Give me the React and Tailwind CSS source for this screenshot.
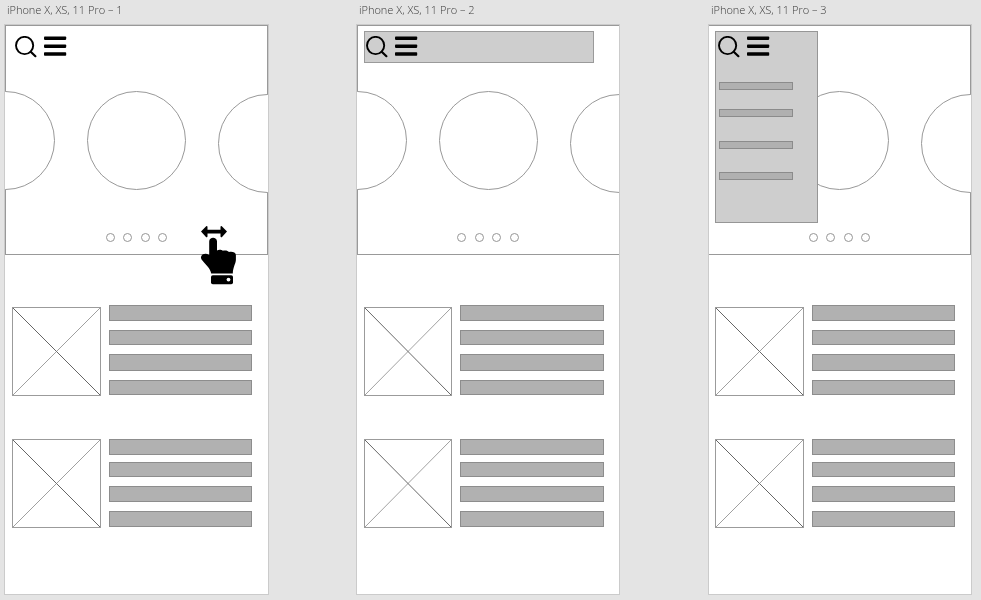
const LIST_ROWS = [
  {
    top: "mt-[50px]",
    image: "mt-[2px]",
    bars: ["h-[16px]", "mt-[9px] h-[15px]", "mt-[9px] h-[17px]", "mt-[9px] h-[15px]"],
    height: "h-[91px]",
  },
  {
    top: "mt-[43px]",
    image: "mt-0",
    bars: ["h-[16px]", "mt-[7px] h-[15px]", "mt-[9px] h-[16px]", "mt-[9px] h-[16px]"],
    height: "h-[89px]",
  },
];

function SearchIcon() {
  return (
    <svg className="block h-[22px] w-[22px] shrink-0" viewBox="0 0 22 22" fill="none" stroke="#000">
      <circle cx="9.6" cy="9.5" r="8.6" strokeWidth="1.9" />
      <path d="M15.7 15.7 20.4 20.2" strokeWidth="2.2" strokeLinecap="round" />
    </svg>
  );
}

function MenuIcon() {
  return (
    <svg className="block h-[22px] w-[23px] shrink-0" viewBox="0 0 23 22">
      <rect x="0" y="0.4" width="22.2" height="3.5" rx="0.8" />
      <rect x="0" y="8.4" width="22.2" height="3.5" rx="0.8" />
      <rect x="0" y="16.3" width="22.2" height="3.5" rx="0.8" />
    </svg>
  );
}

function SwipeHand() {
  return (
    <svg className="absolute left-[195px] top-[200px] z-10 h-[60px] w-[37px]" viewBox="0 0 37 60">
      <path
        d="M6.2 1.2 1 6.6 6.2 12.2Q7.5 12.7 7.5 11.2V8.5H20.5V11.2Q20.5 12.7 21.8 12.2L27 6.6 21.8 1.2Q20.5.7 20.5 2.2V4.8H7.5V2.2Q7.5.7 6.2 1.2Z"
      />
      <path
        d="M9.2 16.4C9.2 11.4 17 11.4 17 16.4V25.4C18.6 24.4 21.6 24.4 22.8 25.8C25 25 28 25.4 29 27C32 26.2 35.7 27.2 35.9 30V35C35.6 39 33 42 32.8 48.5H11.2C10.3 43 5.5 39.5 2.4 35.5C-1.6 31.4 3.7 26.6 9.2 30Z"
      />
      <rect x="11" y="50.3" width="22" height="9" rx="1.8" />
      <circle cx="28.5" cy="54.6" r="1.9" fill="#fff" />
    </svg>
  );
}

function ImagePlaceholder({ className }) {
  return (
    <div className={`h-[89px] shrink-0 border border-[#9b9b9b] ${className}`}>
      <svg className="block h-full w-full" viewBox="0 0 87 87" preserveAspectRatio="none">
        <path d="M0 0 87 87" stroke="#666" strokeWidth="1" />
        <path d="M87 0 0 87" stroke="#777" strokeWidth="0.7" />
      </svg>
    </div>
  );
}

function Circle({ className }) {
  return <div className={`h-[99px] w-[99px] shrink-0 rounded-full border border-[#999] bg-white ${className}`} />;
}

function MenuPanel() {
  return (
    <div className="absolute left-[6px] top-[6px] flex h-[192px] w-[103px] flex-col border border-[#969696] bg-[#cecece] pl-[3px] pt-[50px]">
      <div className="h-[8px] w-[74px] border border-[#8b8b8b] bg-[#b0b0b0]" />
      <div className="mt-[19px] h-[8px] w-[74px] border border-[#8b8b8b] bg-[#b0b0b0]" />
      <div className="mt-[24px] h-[8px] w-[74px] border border-[#8b8b8b] bg-[#b0b0b0]" />
      <div className="mt-[23px] h-[8px] w-[74px] border border-[#8b8b8b] bg-[#b0b0b0]" />
    </div>
  );
}

function Artboard({ number, width, iconInset, firstCircle, carouselShift, dotsInset, listInset, imageWidth, barWidth, heroEdges, children, hand }) {
  return (
    <section className={`flex shrink-0 flex-col ${width}`}>
      <h2 className="h-[24px] whitespace-nowrap pl-[3px] pt-[3px] font-['Open_Sans',sans-serif] text-[11px] font-light leading-[14px] text-[#3a3a3a] will-change-transform">
        iPhone X, XS, 11 Pro – {number}
      </h2>
      <div className="relative flex h-[571px] flex-col overflow-hidden border border-[#cbcbcb] bg-white">
        <div className={`relative h-[230px] shrink-0 border-y border-[#999] ${heroEdges}`}>
          <div className="-mx-px flex h-full flex-col">
            <div className="h-[65px]" />
            <div className={`flex h-[102px] items-start ${carouselShift}`}>
              <Circle className={`-ml-[49px] ${firstCircle}`} />
              <Circle className="ml-[32px]" />
              <Circle className="ml-[32px] mt-[3px]" />
            </div>
            <div className={`mt-[40px] flex gap-[8.5px] ${dotsInset}`}>
              {[0, 1, 2, 3].map((dot) => (
                <div key={dot} className="h-[9px] w-[9px] shrink-0 rounded-full border border-[#969696]" />
              ))}
            </div>
          </div>
        </div>
        {children}
        <div className={`absolute top-[11px] flex ${iconInset}`}>
          <SearchIcon />
          <MenuIcon />
        </div>
        {hand && <SwipeHand />}
        {LIST_ROWS.map((row) => (
          <div key={row.top} className={`flex shrink-0 gap-[8px] ${listInset} ${row.top} ${row.height}`}>
            <ImagePlaceholder className={`${row.image} ${imageWidth}`} />
            <div className={`flex flex-col ${barWidth}`}>
              {row.bars.map((bar, index) => (
                <div key={index} className={`shrink-0 border border-[#8d8d8d] bg-[#b1b1b1] ${bar}`} />
              ))}
            </div>
          </div>
        ))}
      </div>
    </section>
  );
}

export default function App() {
  return (
    <main className="flex h-[600px] w-[981px] overflow-hidden bg-[#e4e4e4] pl-[4px]">
      <Artboard
        number={1}
        width="w-[265px]"
        iconInset="left-[10px] gap-[7px]"
        firstCircle="visible"
        carouselShift="pl-0"
        dotsInset="pl-[100.9px]"
        listInset="pl-[7px]"
        imageWidth="w-[89px]"
        barWidth="w-[143px]"
        heroEdges="border-x"
        hand
      />
      <div className="w-[87px] shrink-0" />
      <Artboard
        number={2}
        width="w-[264px]"
        iconInset="left-[9px] gap-[7px]"
        firstCircle="visible"
        carouselShift="pl-0"
        dotsInset="pl-[100.4px]"
        listInset="pl-[7px]"
        imageWidth="w-[88px]"
        barWidth="w-[144px]"
        heroEdges="border-l pr-px"
      >
        <div className="absolute left-[7px] top-[6px] h-[32px] w-[230px] border border-[#9a9a9a] bg-[#cecece]" />
      </Artboard>
      <div className="w-[88px] shrink-0" />
      <Artboard
        number={3}
        width="w-[264px]"
        iconInset="left-[9px] gap-[7px]"
        firstCircle="invisible"
        carouselShift="-ml-px"
        dotsInset="pl-[99.9px]"
        listInset="pl-[6px]"
        imageWidth="w-[89px]"
        barWidth="w-[143px]"
        heroEdges="border-r pl-px"
      >
        <MenuPanel />
      </Artboard>
    </main>
  );
}
